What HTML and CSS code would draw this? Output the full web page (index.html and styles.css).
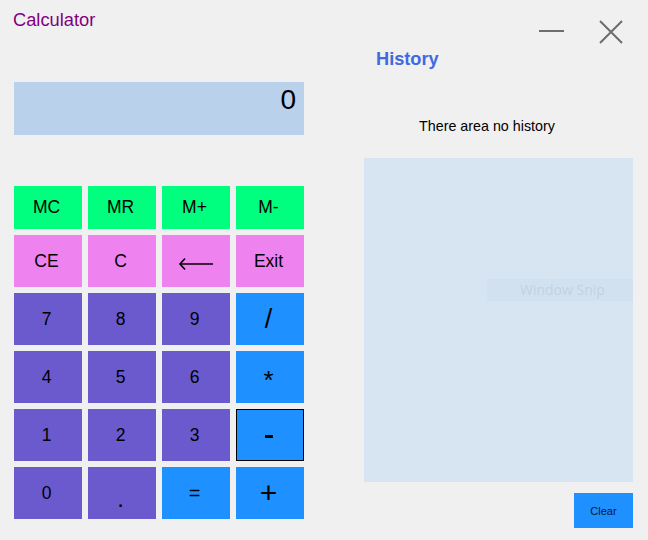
FILE: index.html
```html
<!DOCTYPE html>
<html>
<head>
<meta charset="utf-8">
<link rel="stylesheet" href="styles.css">
</head>
<body>
<div class="window">
  <div class="calc">
    <div class="app-title">Calculator</div>
    <div class="display">0</div>
    <div class="keypad">
      <button class="key mem">MC</button>
      <button class="key mem">MR</button>
      <button class="key mem">M+</button>
      <button class="key mem">M-</button>
      <button class="key fn">CE</button>
      <button class="key fn">C</button>
      <button class="key fn"><svg class="arrow" width="36" height="14" viewBox="0 0 36 14"><path d="M2 7 H35" stroke="#000" stroke-width="1.6" fill="none"/><path d="M7 1.5 L2 7 L7 12.5" stroke="#000" stroke-width="1.6" fill="none"/></svg></button>
      <button class="key fn">Exit</button>
      <button class="key num">7</button>
      <button class="key num">8</button>
      <button class="key num">9</button>
      <button class="key op slash">/</button>
      <button class="key num">4</button>
      <button class="key num">5</button>
      <button class="key num">6</button>
      <button class="key op star">*</button>
      <button class="key num">1</button>
      <button class="key num">2</button>
      <button class="key num">3</button>
      <button class="key op focused"><span class="dash"></span></button>
      <button class="key num">0</button>
      <button class="key num dot">.</button>
      <button class="key op eq">=</button>
      <button class="key op plus">+</button>
    </div>
  </div>
  <div class="history">
    <div class="controls">
      <svg class="ctl" width="26" height="24" viewBox="0 0 26 24"><path d="M0 11 H25" stroke="#6d6d6d" stroke-width="2"/></svg>
      <svg class="ctl close" width="24" height="24" viewBox="0 0 24 24"><path d="M1 1 L23 23 M23 1 L1 23" stroke="#6d6d6d" stroke-width="2" fill="none"/></svg>
    </div>
    <div class="hist-title">History</div>
    <div class="empty">There area no history</div>
    <div class="panel">
      <div class="snip">Window Snip</div>
    </div>
    <button class="clear">Clear</button>
  </div>
</div>
</body>
</html>
```
FILE: styles.css
```css
html, body {
  margin: 0;
  padding: 0;
  background: #f0f0f0;
}
.window {
  width: 648px;
  height: 540px;
  display: flex;
  font-family: "Liberation Sans", Arial, sans-serif;
  overflow: hidden;
}
.calc {
  width: 290px;
  padding-left: 14px;
  padding-top: 9px;
  display: flex;
  flex-direction: column;
}
.app-title {
  color: #800080;
  font-size: 18.3px;
  line-height: 22px;
  margin-left: -1px;
}
.display {
  margin-top: 51px;
  height: 53px;
  box-sizing: border-box;
  background: #b9d1ea;
  text-align: right;
  font-size: 28px;
  line-height: 32px;
  padding: 2px 8px 0 0;
  color: #000;
}
.keypad {
  margin-top: 51px;
  display: grid;
  grid-template-columns: repeat(4, 68px);
  grid-template-rows: 43px repeat(5, 52px);
  gap: 6px;
}
.key {
  border: none;
  margin: 0;
  padding: 0 3px 0 0;
  font-family: "Liberation Sans", Arial, sans-serif;
  font-size: 17.5px;
  color: #000;
  display: flex;
  align-items: center;
  justify-content: center;
}
.mem { background: #00ff7f; }
.fn { background: #ee82ee; }
.num { background: #6a5acd; }
.op { background: #1e90ff; }
.slash { font-size: 27px; }
.star { font-size: 26px; padding-top: 6px; }
.eq { font-size: 20px; }
.plus { font-size: 30px; }
.dot { font-size: 24px; padding-top: 12px; }
.arrow { margin-top: 5px; margin-left: 2px; }
.focused {
  border: 1px solid #000;
}
.dash {
  display: block;
  width: 8px;
  height: 3px;
  background: #000;
  margin-top: 2px;
}
.history {
  margin-left: 60px;
  width: 269px;
  display: flex;
  flex-direction: column;
}
.controls {
  margin-top: 20px;
  height: 24px;
  display: flex;
  justify-content: flex-end;
  padding-right: 10px;
  gap: 34px;
}
.hist-title {
  margin-top: 4px;
  padding-left: 12px;
  color: #4169e1;
  font-weight: bold;
  font-size: 18.2px;
  line-height: 22px;
}
.empty {
  margin-top: 48px;
  padding-left: 55px;
  font-size: 14.3px;
  line-height: 17px;
  color: #000;
}
.panel {
  margin-top: 23px;
  height: 324px;
  background: #d7e4f1;
  position: relative;
}
.snip {
  position: absolute;
  left: 123px;
  top: 121px;
  width: 146px;
  height: 22px;
  box-sizing: border-box;
  padding-left: 33px;
  background: #d2e1f0;
  color: #c5d1e0;
  font-family: "Open Sans", sans-serif;
  font-size: 14px;
  line-height: 22px;
}
.clear {
  margin-top: 11px;
  align-self: flex-end;
  width: 59px;
  height: 35px;
  border: none;
  background: #1e90ff;
  font-family: "Liberation Sans", Arial, sans-serif;
  font-size: 11px;
  color: #0a1630;
  padding: 0;
}
```
